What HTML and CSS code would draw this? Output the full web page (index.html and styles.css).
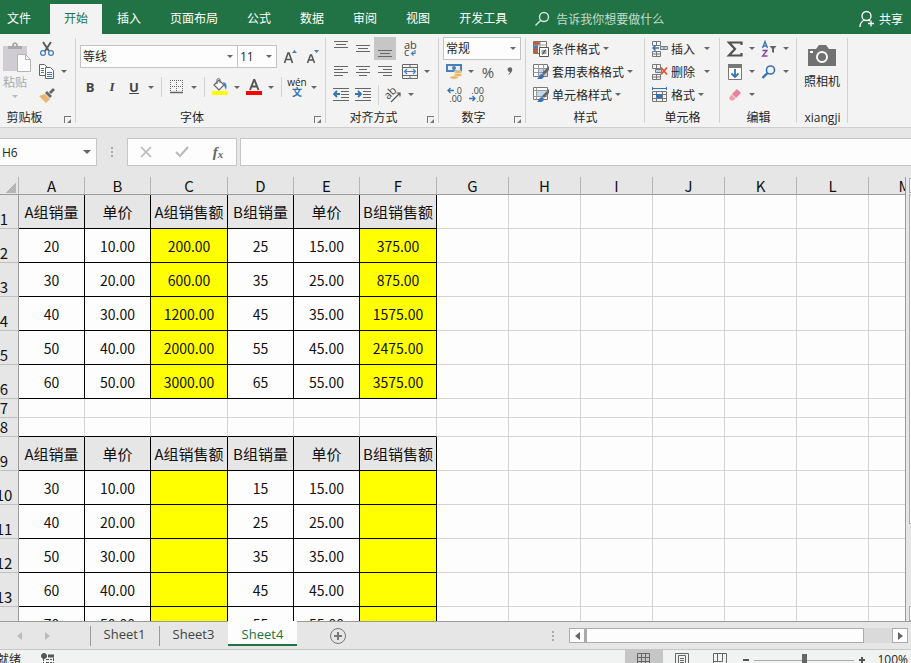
FILE: index.html
```html
<!DOCTYPE html>
<html lang="zh-CN">
<head>
  <meta charset="UTF-8">
  <title>Excel</title>
  <meta name="viewport" content="width=device-width, initial-scale=1.0">
  <link rel="stylesheet" href="styles.css">
</head>
<body>
  <nav class="menu">
    <button class="file">文件</button>
    <button class="active">开始</button>
    <button>插入</button>
    <button>页面布局</button>
    <button>公式</button>
    <button>数据</button>
    <button>审阅</button>
    <button>视图</button>
    <button>开发工具</button>
    <label class="tell-me">
      <svg width="16" height="16" viewBox="0 0 16 16" fill="none" stroke="#d5e6dc" stroke-width="1.4"><circle cx="10" cy="6" r="4.5"/><path d="M6.8 9.2L1.5 14.5"/></svg>
      <input type="text" placeholder="告诉我你想要做什么">
    </label>
    <button class="share">
      <svg width="16" height="18" viewBox="0 0 16 18" fill="none" stroke="#fff" stroke-width="1.3"><circle cx="7.500" cy="6" r="4.500"/><path d="M1 17c0-4 2-6 4.500-7M9 10l2 1M12 10.500v6M9 13.500h6"/></svg>
      共享
    </button>
  </nav>

  <div class="ribbon">
    <section class="group clipboard">
      <div class="body">
        <button class="paste">
          <svg width="30" height="32" viewBox="0 0 30 32"><path d="M1 5h24v25H1z" fill="#cfcdd2"/><path d="M6 8V5h4c0-5 6-5 6 0h4v3z" fill="#a9a9a9"/><circle cx="13" cy="4" r="1" fill="#fff"/><path d="M15.500 13.500h8l5 5v12h-13z" fill="#fbfbfb" stroke="#b4b4b4"/><path d="M23.500 13.500v5h5" fill="none" stroke="#b4b4b4"/></svg>
          <span>粘贴</span>
          <i class="caret"></i>
        </button>
        <div class="rows">
          <div class="row">
            <button class="tool" aria-label="剪切"><svg width="16" height="16" viewBox="0 0 16 16" fill="none"><path d="M4 1l6 9M12 1L6 10" stroke="#5c5c5c" stroke-width="2"/><circle cx="4" cy="12" r="2.400" stroke="#4a7ebb" stroke-width="1.300"/><circle cx="12" cy="12" r="2.400" stroke="#4a7ebb" stroke-width="1.300"/></svg></button>
          </div>
          <div class="row">
            <button class="tool" aria-label="复制"><svg width="16" height="15" viewBox="0 0 16 15" fill="#fff" stroke="#666"><path d="M.5.500h5l3 3v8h-8z"/><path d="M6.500 3.500h5l3 3v8h-8z"/><path d="M2 4.500h3M2 6.500h3M2 8.500h3M8 8.500h5M8 10.500h5M8 12.500h5" stroke="#4a7ebb"/></svg></button>
            <i class="caret"></i>
          </div>
          <div class="row">
            <button class="tool" aria-label="格式刷"><svg width="18" height="16" viewBox="0 0 18 16"><path d="M1 9l6-2 5 5-4 4z" fill="#eab66e"/><path d="M7 6l2-2 5 5-2 2z" fill="#666"/><path d="M11 5l4-4 2 2-4 4z" fill="#666"/></svg></button>
          </div>
        </div>
      </div>
      <h2>剪贴板</h2>
      <i class="launcher"></i>
    </section>

    <section class="group font">
      <div class="body">
        <div class="combos">
          <span class="select font-name"><select aria-label="字体"><option>等线</option></select></span>
          <span class="select font-size"><select aria-label="字号"><option>11</option></select></span>
          <button class="tool grow" aria-label="增大字号"><svg width="16" height="18" viewBox="0 0 16 18"><path d="M1.500 15L5 5h1l3.500 10M3 11.500h5" fill="none" stroke="#555" stroke-width="1.600"/><path d="M9 5l2.500-3L14 5z" fill="#4a7ebb"/></svg></button>
          <button class="tool" aria-label="减小字号"><svg width="16" height="18" viewBox="0 0 16 18"><path d="M1.500 15l3-8h1l3 8M2.500 12h5" fill="none" stroke="#555" stroke-width="1.500"/><path d="M8 2h5l-2.500 3z" fill="#4a7ebb"/></svg></button>
        </div>
        <div class="row">
          <button class="tool bold">B</button>
          <button class="tool italic">I</button>
          <button class="tool underline">U</button>
          <i class="caret"></i>
          <i class="sep"></i>
          <button class="tool" aria-label="边框"><svg width="14" height="14" viewBox="0 0 14 14" fill="none" stroke="#666"><path d="M.5 0v12M6.500 0v12M12.500 0v12M0 .5h13M0 6.500h13" stroke-dasharray="1 1"/><path d="M0 12.500h13" stroke-width="1.500"/></svg></button>
          <i class="caret"></i>
          <i class="sep"></i>
          <button class="tool" aria-label="填充颜色"><svg width="18" height="18" viewBox="0 0 18 18"><path d="M3 7l5-5 5 5-5 5z" fill="#fff" stroke="#666" stroke-width="1.200"/><path d="M6 6V2c0-2 3-2 3 0v3" fill="none" stroke="#666"/><path d="M12 4c4 1 4 4 3 8-1-2-1-3-2-4z" fill="#4a7ebb"/><path d="M1 13h16v4H1z" fill="#ff0"/></svg></button>
          <i class="caret"></i>
          <button class="tool" aria-label="字体颜色"><svg width="18" height="18" viewBox="0 0 18 18"><path d="M5 12L9 2h.500l4 10M6.500 8.500h6" fill="none" stroke="#555" stroke-width="1.900"/><path d="M1 13h16v4H1z" fill="#f00"/></svg></button>
          <i class="caret"></i>
          <i class="sep"></i>
          <button class="tool wen"><span>wén</span><b>文</b></button>
          <i class="caret"></i>
        </div>
      </div>
      <h2>字体</h2>
      <i class="launcher"></i>
    </section>

    <section class="group align">
      <div class="body">
        <div class="rows">
          <div class="row">
            <button class="tool" aria-label="顶端对齐"><svg width="16" height="16" viewBox="0 0 16 16" stroke="#666"><path d="M1 .5h14M3 3.500h10M1 6.500h14"/></svg></button>
            <button class="tool" aria-label="垂直居中"><svg width="16" height="16" viewBox="0 0 16 16" stroke="#666"><path d="M1 4.500h14M3 7.500h10M1 10.500h14"/></svg></button>
            <button class="tool pressed" aria-label="底端对齐"><svg width="16" height="16" viewBox="0 0 16 16" stroke="#666"><path d="M1 9.500h14M3 12.500h10M1 15.500h14"/></svg></button>
            <button class="tool spaced" aria-label="自动换行"><svg width="16" height="18" viewBox="0 0 16 18"><text x="2" y="9" class="glyph">ab</text><text x="2" y="16" class="glyph">c</text><path d="M13 10v3.500H9.500M11.500 11.500l-2 2 2 2" fill="none" stroke="#4a7ebb" stroke-width="1.200"/></svg></button>
          </div>
          <div class="row">
            <button class="tool" aria-label="左对齐"><svg width="16" height="16" viewBox="0 0 16 16" stroke="#666"><path d="M1 2.500h14M1 5.500h9M1 8.500h14M1 11.500h9"/></svg></button>
            <button class="tool" aria-label="居中"><svg width="16" height="16" viewBox="0 0 16 16" stroke="#666"><path d="M1 2.500h14M4 5.500h8M1 8.500h14M4 11.500h8"/></svg></button>
            <button class="tool" aria-label="右对齐"><svg width="16" height="16" viewBox="0 0 16 16" stroke="#666"><path d="M1 2.500h14M6 5.500h9M1 8.500h14M6 11.500h9"/></svg></button>
            <button class="tool spaced" aria-label="合并后居中"><svg width="16" height="16" viewBox="0 0 16 16" fill="none" stroke="#666"><path d="M.5.500h15v14H.5zM.5 3.500h15M.5 11.500h15M8 .5v3M8 11.500v3"/><path d="M2.500 7.500h11M5 5L2.500 7.500 5 10M11 5l2.500 2.500L11 10" stroke="#4a7ebb" stroke-width="1.200"/></svg></button>
            <i class="caret"></i>
          </div>
          <div class="row">
            <button class="tool" aria-label="减少缩进"><svg width="16" height="16" viewBox="0 0 16 16" stroke="#666" fill="none"><path d="M0 1.500h16M8 4.500h8M8 7.500h8M8 10.500h8M0 13.500h16"/><path d="M7 7H1.500M4 4L1 7l3 3" stroke="#3573b5" stroke-width="1.800"/></svg></button>
            <button class="tool" aria-label="增加缩进"><svg width="16" height="16" viewBox="0 0 16 16" stroke="#666" fill="none"><path d="M0 1.500h16M8 4.500h8M8 7.500h8M8 10.500h8M0 13.500h16"/><path d="M0 7h5.500M3 4l3 3-3 3" stroke="#3573b5" stroke-width="1.800"/></svg></button>
            <i class="sep"></i>
            <button class="tool" aria-label="方向"><svg width="18" height="16" viewBox="0 0 18 16"><text x="0" y="11" transform="rotate(-45 4 8)" class="glyph">ab</text><path d="M6 15l9-9M11.500 6H15v3.500" fill="none" stroke="#555" stroke-width="1.200"/></svg></button>
            <i class="caret"></i>
          </div>
        </div>
      </div>
      <h2>对齐方式</h2>
      <i class="launcher"></i>
    </section>

    <section class="group number">
      <div class="body">
        <div class="rows">
          <span class="select"><select aria-label="数字格式"><option>常规</option></select></span>
          <div class="row">
            <button class="tool" aria-label="会计数字格式"><svg width="18" height="17" viewBox="0 0 18 17"><path d="M1 1h16v8H1z" fill="#4a7ebb"/><path d="M3 3h12v4H3z" fill="#e8eff7"/><circle cx="9" cy="5" r="2" fill="#4a7ebb"/><g fill="#e8b563" stroke="#f3f3f3" stroke-width=".5"><ellipse cx="13" cy="9" rx="4" ry="1.700"/><ellipse cx="13" cy="12" rx="4" ry="1.700"/><ellipse cx="9" cy="14.500" rx="4" ry="1.700"/></g></svg></button>
            <i class="caret"></i>
            <button class="tool percent">%</button>
            <button class="tool" aria-label="千位分隔样式"><svg width="8" height="12" viewBox="0 0 8 12"><path d="M2 2c3-2 5 0 4 3-1 2-2 3-4 4 1-2 2-2 2-3-2 0-3-2-2-4z" fill="#666"/></svg></button>
          </div>
          <div class="row">
            <button class="tool decimal" aria-label="增加小数位数"><span><svg width="7" height="7" viewBox="0 0 7 7"><path d="M7 3.500H1M3.500 1L1 3.500 3.500 6" fill="none" stroke="#3573b5" stroke-width="1.300"/></svg>.0</span><span>.00</span></button>
            <button class="tool decimal" aria-label="减少小数位数"><span>.00</span><span><svg width="7" height="7" viewBox="0 0 7 7"><path d="M0 3.500h6M3.500 1L6 3.500 3.500 6" fill="none" stroke="#3573b5" stroke-width="1.300"/></svg>.0</span></button>
          </div>
        </div>
      </div>
      <h2>数字</h2>
      <i class="launcher"></i>
    </section>

    <section class="group styles">
      <div class="body">
        <div class="rows">
          <button class="command"><svg width="16" height="16" viewBox="0 0 16 16"><path d="M.5.500h13v12H.5z" fill="#fff" stroke="#777"/><path d="M1 1h6v3H1zM1 8h4v4H1z" fill="#d35230"/><path d="M1 4h4v4H1z" fill="#4a7ebb"/><path d="M7 1v6M1 4h13" stroke="#999"/><path d="M6.500 6.500h9v9h-9z" fill="#fff" stroke="#555"/><path d="M8.500 10h5M8.500 12h5M12.500 8.500l-3 5" stroke="#444"/></svg>条件格式<i class="caret"></i></button>
          <button class="command"><svg width="16" height="16" viewBox="0 0 16 16"><path d="M.5.500h14v12H.5z" fill="#fff" stroke="#777"/><path d="M5 4h9v8H5z" fill="#c3d5ea"/><path d="M.5 4.500h14M.5 8.500h14M5.500.500v12M10.500.500v12" stroke="#999"/><path d="M16 2v4l-5 5-2-2z" fill="#666"/><path d="M4 15c2-1 2-5 5-5 3 1 2 5-1 5z" fill="#3573b5"/></svg>套用表格格式<i class="caret"></i></button>
          <button class="command"><svg width="16" height="16" viewBox="0 0 16 16"><path d="M.5.500h14v12H.5z" fill="#fff" stroke="#777"/><path d="M.5 3.500h14M.5 9.500h14M3.500.500v12" stroke="#999"/><path d="M4 4h9v5H4z" fill="#c3d5ea"/><path d="M16 2v4l-5 5-2-2z" fill="#666"/><path d="M4 15c2-1 2-5 5-5 3 1 2 5-1 5z" fill="#3573b5"/></svg>单元格样式<i class="caret"></i></button>
        </div>
      </div>
      <h2>样式</h2>
    </section>

    <section class="group cells">
      <div class="body">
        <div class="rows">
          <button class="command"><svg width="16" height="16" viewBox="0 0 16 16" fill="none" stroke="#777"><path d="M.5.500h8v4h-8zM4.500.500v4M.5 10.500h8v5h-8zM4.500 10.500v5M.5 13h8"/><path d="M8.500 5.500h7v3h-7zM12 5.500v3" fill="#c3d5ea"/><path d="M7 7H1M3.500 4.500L1 7l2.500 2.500" stroke="#3573b5" stroke-width="1.500"/></svg>插入<i class="caret far"></i></button>
          <button class="command"><svg width="16" height="16" viewBox="0 0 16 16" fill="none" stroke="#777"><path d="M.5.500h8v4h-8zM4.500.500v4M.5 10.500h8v5h-8zM4.500 10.500v5M.5 13h8"/><path d="M3.500 5.500h6v3h-6z" fill="#c3d5ea"/><path d="M9 3.500l6 7M15 3.500l-6 7" stroke="#e0532f" stroke-width="1.800"/></svg>删除<i class="caret far"></i></button>
          <button class="command"><svg width="16" height="16" viewBox="0 0 16 16" fill="none" stroke="#777"><path d="M1 1.500h13M.5 0v3M14.500 0v3" stroke="#3573b5"/><path d="M.5 4.500h14v10H.5zM.5 7.500h14M.5 11.500h14M4.500 4.500v10M10.500 4.500v10"/><path d="M4 7h6v4H4z" fill="#3573b5" stroke="none"/></svg>格式<i class="caret"></i></button>
        </div>
      </div>
      <h2>单元格</h2>
    </section>

    <section class="group edit">
      <div class="body">
        <div class="rows">
          <div class="row">
            <button class="tool" aria-label="自动求和"><svg width="18" height="16" viewBox="0 0 18 16"><path d="M15.500 4V1.500H3L9 8l-6 6.500h12.500V12" fill="none" stroke="#505050" stroke-width="2.200"/></svg></button>
            <i class="caret"></i>
            <button class="tool" aria-label="排序和筛选"><svg width="16" height="18" viewBox="0 0 16 18" fill="none"><path d="M1.500 8l2.500-6.500L6.500 8M2.500 6h3" stroke="#3573b5" stroke-width="1.300"/><path d="M1.500 10.500h4.500l-4.500 5.500h5" stroke="#8444a4" stroke-width="1.300"/><path d="M8.500 6h7l-2.500 3v4l-2-1V9z" fill="#666"/></svg></button>
            <i class="caret"></i>
          </div>
          <div class="row">
            <button class="tool" aria-label="填充"><svg width="14" height="16" viewBox="0 0 14 16" fill="none"><path d="M.5.500h13v15H.5z" fill="#fff" stroke="#777"/><path d="M0 0h14v4H0z" fill="#777"/><path d="M7 5v8M3.500 9.500L7 13l3.500-3.500" stroke="#3573b5" stroke-width="1.800"/></svg></button>
            <i class="caret"></i>
            <button class="tool" aria-label="查找和选择"><svg width="16" height="14" viewBox="0 0 16 14" fill="none" stroke="#3573b5"><circle cx="9.500" cy="5" r="4" stroke-width="1.600"/><path d="M6.500 8L1.500 13" stroke-width="2.400"/></svg></button>
            <i class="caret"></i>
          </div>
          <div class="row">
            <button class="tool" aria-label="清除"><svg width="14" height="14" viewBox="0 0 14 14"><path d="M9 1l4 4-5 5-4-4z" fill="#e8829a"/><path d="M3.500 6.500l4 4-2 2h-3L1 10z" fill="#ef9fb2"/></svg></button>
            <i class="caret"></i>
          </div>
        </div>
      </div>
      <h2>编辑</h2>
    </section>

    <section class="group camera">
      <div class="body">
        <button>
          <svg width="28" height="24" viewBox="0 0 28 24"><path d="M0 5h8l3-4h7l3 4h7v17H0z" fill="#717171"/><circle cx="14" cy="13" r="5" fill="none" stroke="#fff" stroke-width="2"/><path d="M2 7h3v2H2z" fill="#fff"/></svg>
          照相机
        </button>
      </div>
      <h2>xiangji</h2>
    </section>
  </div>

  <div class="formula-bar">
    <div class="name-box"><input type="text" value="H6" aria-label="名称框"><i class="caret"></i></div>
    <i class="dots"></i>
    <div class="formula-buttons">
      <button aria-label="取消"><svg width="12" height="12" viewBox="0 0 12 12"><path d="M1 1l10 10M11 1L1 11" stroke="#b9b9b9" stroke-width="1.700"/></svg></button>
      <button aria-label="输入"><svg width="14" height="12" viewBox="0 0 14 12"><path d="M1 6l4 4 8-9" fill="none" stroke="#b9b9b9" stroke-width="2"/></svg></button>
      <button class="fx">f<small>x</small></button>
    </div>
    <input class="formula" type="text" aria-label="编辑栏">
  </div>

  <main class="workspace">
    <div class="sheet">
      <table>
        <colgroup>
          <col class="col-row"><col class="col-s"><col class="col-s"><col class="col-l"><col class="col-s"><col class="col-s"><col class="col-l">
          <col class="col-m"><col class="col-m"><col class="col-m"><col class="col-m"><col class="col-m"><col class="col-m"><col class="col-m">
        </colgroup>
        <thead></thead>
        <tbody></tbody>
      </table>
    </div>
    <div class="v-scroll"><i class="v-up"></i><i class="v-thumb"></i><i class="v-down"></i></div>
  </main>

  <div class="sheet-bar">
    <button class="nav" aria-label="上一个"><i class="arrow left"></i></button>
    <button class="nav" aria-label="下一个"><i class="arrow right"></i></button>
    <div class="sheet-tabs">
      <button>Sheet1</button>
      <button>Sheet3</button>
      <button class="active">Sheet4</button>
    </div>
    <button class="add" aria-label="新工作表"><svg width="18" height="18" viewBox="0 0 18 18" fill="none" stroke="#777"><circle cx="9" cy="9" r="7.500"/><path d="M9 5v8M5 9h8" stroke-width="2"/></svg></button>
    <i class="dots"></i>
    <div class="h-scroll">
      <button aria-label="向左"><i class="arrow left"></i></button>
      <i class="h-thumb"></i>
      <button aria-label="向右"><i class="arrow right"></i></button>
    </div>
  </div>

  <footer class="status">
    <span class="ready">就绪</span>
    <svg width="14" height="14" viewBox="0 0 14 14" fill="none" stroke="#555"><path d="M2.500 5v8.500h10v-11H8M5 6.500h6M5 9.500h6M5 12h6" stroke-dasharray="3 1"/><path d="M7 3h6" stroke-width="3"/><circle cx="3" cy="3" r="2.500" fill="#555"/></svg>
    <div class="views">
      <button class="active" aria-label="普通"><svg width="14" height="14" viewBox="0 0 14 14" fill="none" stroke="#666"><path d="M.5.500h12v13H.5zM4.500.500v13M8.500.500v13M.5 4.500h12M.5 8.500h12"/></svg></button>
      <button aria-label="页面布局"><svg width="14" height="14" viewBox="0 0 14 14" fill="none" stroke="#666"><path d="M.5.500h13v13H.5zM3.500 2.500h7v11h-7zM5 5.500h4M5 7.500h4M5 9.500h4"/></svg></button>
      <button aria-label="分页预览"><svg width="14" height="14" viewBox="0 0 14 14" fill="none" stroke="#666"><path d="M.5.500h13v13H.5zM4.500.500v8M9.500.500v8M.5 8.500h9"/></svg></button>
    </div>
    <button class="zoom-step" aria-label="缩小"><svg width="8" height="8" viewBox="0 0 8 8"><path d="M1 4h6" stroke="#555" stroke-width="2"/></svg></button>
    <input class="zoom" type="range" min="0" max="100" value="50" aria-label="缩放">
    <button class="zoom-step" aria-label="放大"><svg width="8" height="8" viewBox="0 0 8 8"><path d="M1 4h6M4 1v6" stroke="#555" stroke-width="2"/></svg></button>
    <span class="percent-label">100%</span>
  </footer>

  <script>
    const columns = ['A', 'B', 'C', 'D', 'E', 'F', 'G', 'H', 'I', 'J', 'K', 'L', 'M'];
    const titles = ['A组销量', '单价', 'A组销售额', 'B组销量', '单价', 'B组销售额'];

    const rows = [
      titles,
      ['20', '10.00', '200.00', '25', '15.00', '375.00'],
      ['30', '20.00', '600.00', '35', '25.00', '875.00'],
      ['40', '30.00', '1200.00', '45', '35.00', '1575.00'],
      ['50', '40.00', '2000.00', '55', '45.00', '2475.00'],
      ['60', '50.00', '3000.00', '65', '55.00', '3575.00'],
      [],
      [],
      titles,
      ['30', '10.00', '', '15', '15.00', ''],
      ['40', '20.00', '', '25', '25.00', ''],
      ['50', '30.00', '', '35', '35.00', ''],
      ['60', '40.00', '', '45', '45.00', ''],
      ['70', '50.00', '', '55', '55.00', '']
    ];

    document.querySelector('thead').innerHTML =
      '<tr><th class="corner"></th>' + columns.map(c => `<th>${c}</th>`).join('') + '</tr>';

    function cellClass(row, r, c) {
      if (c > 5) return '';
      if (!row.length) return rows[r + 1].length ? 'edge' : '';
      if (row === titles) return 'cell title';
      return c === 2 || c === 5 ? 'cell total' : 'cell';
    }

    document.querySelector('tbody').innerHTML = rows.map((row, r) => {
      const cells = columns.map((name, c) => `<td class="${cellClass(row, r, c)}">${row[c] || ''}</td>`).join('');
      return `<tr class="${row.length ? 'tall' : 'short'}"><th><span>${r + 1}</span></th>${cells}</tr>`;
    }).join('');
  </script>
</body>
</html>
```
FILE: styles.css
```css
* {
  box-sizing: border-box;
  margin: 0;
  padding: 0;
}

body {
  font-family: "Open Sans", "Noto Sans CJK SC", sans-serif;
  font-size: 12px;
  color: #262626;
  background-color: #e6e6e6;
  height: 100vh;
  display: flex;
  flex-direction: column;
  overflow: hidden;
}

button,
input,
select {
  font: inherit;
  color: inherit;
  border: none;
  background: none;
  border-radius: 0;
  outline: none;
}

button {
  white-space: nowrap;
}

svg {
  display: block;
  flex: none;
}

.glyph {
  font-size: 11px;
  fill: #444;
}

/* menu */
.menu {
  background-color: #217346;
  color: white;
  height: 34px;
  flex: none;
  display: flex;
  gap: 1px;
  padding-top: 4px;
}

.menu button {
  padding: 0 14px 2px;
}

.menu .file {
  padding-left: 7px;
  padding-right: 18px;
}

.menu .active {
  background-color: #f3f3f3;
  color: #217346;
}

.tell-me {
  display: flex;
  align-items: center;
  gap: 6px;
  margin-left: 12px;
  flex: 1;
}

.tell-me input {
  width: 160px;
}

.tell-me input::placeholder {
  color: #c5dccf;
  opacity: 1;
}

.menu .share {
  display: flex;
  align-items: center;
  gap: 4px;
  padding: 0 8px 0 0;
}

/* ribbon */
.ribbon {
  background-color: #f3f3f3;
  border-bottom: 1px solid #cfcfcf;
  height: 94px;
  flex: none;
  display: flex;
  padding-top: 3px;
}

.group {
  position: relative;
  display: flex;
  flex-direction: column;
  flex: none;
}

.group::after {
  content: "";
  position: absolute;
  right: 0;
  top: 1px;
  bottom: 4px;
  width: 1px;
  background-color: #d2d2d2;
}

.group h2 {
  font-size: 12px;
  font-weight: normal;
  line-height: 18px;
  padding-top: 3px;
  text-align: center;
}

.body {
  height: 69px;
  display: flex;
}

.rows {
  display: flex;
  flex-direction: column;
}

.row {
  display: flex;
  align-items: center;
  height: 23px;
}

.tool {
  width: 22px;
  height: 23px;
  display: flex;
  align-items: center;
  justify-content: center;
}

.pressed {
  background-color: #c6c6c6;
}

.caret {
  width: 12px;
  flex: none;
  display: flex;
  justify-content: center;
}

.caret::before,
.select::after {
  content: "";
  border: 3px solid transparent;
  border-top-color: #666;
  border-bottom: none;
}

.sep {
  width: 1px;
  height: 20px;
  margin: 0 4px;
  background-color: #d2d2d2;
}

.launcher {
  position: absolute;
  right: 5px;
  bottom: 4px;
  width: 7px;
  height: 7px;
  border-left: 1px solid #777;
  border-top: 1px solid #777;
}

.launcher::after {
  content: "";
  position: absolute;
  right: 0;
  bottom: 0;
  border: 2px solid #777;
  border-left-color: transparent;
  border-top-color: transparent;
}

.select {
  position: relative;
  display: block;
  height: 23px;
  border: 1px solid #c3c3c3;
  background-color: #fdfdfd;
}

.select select {
  appearance: none;
  width: 100%;
  height: 21px;
  padding: 0 2px;
}

.select::after {
  position: absolute;
  right: 4px;
  top: 9px;
  pointer-events: none;
}

.clipboard {
  width: 76px;
}

.clipboard h2 {
  padding-right: 27px;
}

.paste {
  width: 36px;
  color: #aaa;
  display: flex;
  flex-direction: column;
  align-items: center;
  padding: 4px 6px 0 0;
}

.paste svg {
  margin-left: 4px;
}

.paste .caret {
  padding-top: 4px;
}

.paste .caret::before {
  border-top-color: #b8b8b8;
}

.font {
  width: 250px;
}

.font .body {
  flex-direction: column;
  padding: 8px 0 0 3px;
}

.font .row {
  height: 38px;
}

.font h2 {
  padding-right: 18px;
}

.combos {
  display: flex;
  padding-left: 1px;
}

.font-name {
  width: 158px;
}

.font-size {
  width: 40px;
  margin-left: -1px;
}

.grow {
  margin: 0 1px 0 3px;
}

.bold,
.italic,
.underline {
  font-weight: bold;
  font-size: 13px;
  color: #444;
}

.italic {
  font-family: "Liberation Serif", serif;
  font-style: italic;
}

.underline {
  text-decoration: underline;
}

.wen {
  flex-direction: column;
  font-size: 10px;
  line-height: 10px;
}

.wen b {
  color: #3573b5;
}

.align {
  width: 113px;
}

.align .body,
.number .body,
.edit .body {
  padding-left: 4px;
}

.align h2,
.number h2 {
  padding-right: 18px;
}

.spaced {
  margin-left: 3px;
}

.number {
  width: 87px;
}

.number .select {
  width: 78px;
}

.percent {
  font-size: 15px;
  color: #555;
}

.decimal {
  flex-direction: column;
  align-items: flex-end;
  padding-right: 3px;
  font-size: 9px;
  line-height: 8px;
  color: #444;
}

.decimal span {
  display: flex;
  align-items: center;
}

.styles {
  width: 119px;
}

.styles .body,
.cells .body {
  padding-left: 7px;
}

.command {
  height: 23px;
  display: flex;
  align-items: center;
}

.command svg {
  margin-right: 3px;
}

.far {
  margin-left: 6px;
}

.cells {
  width: 75px;
}

.edit {
  width: 77px;
}

.camera {
  width: 51px;
}

.camera button {
  width: 50px;
  display: flex;
  flex-direction: column;
  align-items: center;
  gap: 4px;
  padding-top: 7px;
}

/* formula bar */
.formula-bar {
  height: 49px;
  flex: none;
  display: flex;
  padding: 10px 0 11px;
}

.name-box {
  width: 97px;
  display: flex;
  align-items: center;
  border: 1px solid #c6c6c6;
  border-left: none;
  background-color: #fdfdfd;
  padding-right: 3px;
}

.name-box input {
  flex: 1;
  min-width: 0;
  padding-left: 2px;
}

.name-box .caret::before {
  border-width: 4px 4px 0;
}

.dots {
  align-self: center;
  width: 2px;
  height: 10px;
  background: repeating-linear-gradient(#aaa 0 2px, transparent 2px 4px);
}

.formula-bar .dots {
  margin: 0 14px;
}

.formula-buttons {
  display: flex;
  width: 110px;
  margin-right: 3px;
  border: 1px solid #c6c6c6;
  background-color: #fdfdfd;
}

.formula-buttons button {
  flex: 1;
  display: flex;
  align-items: center;
  justify-content: center;
}

.formula-buttons .fx {
  font-family: "Liberation Serif", serif;
  font-style: italic;
  font-weight: bold;
  font-size: 15px;
  color: #666;
}

.fx small {
  font-size: 11px;
  padding-top: 4px;
}

.formula {
  flex: 1;
  min-width: 0;
  border: 1px solid #c6c6c6;
  border-right: none;
  background-color: #fdfdfd;
}

/* sheet */
.workspace {
  flex: 1;
  min-height: 0;
  display: flex;
}

.sheet {
  flex: 1;
  min-width: 0;
  overflow: hidden;
  border-right: 1px solid #9b9b9b;
}

table {
  table-layout: fixed;
  width: 941px;
  border-spacing: 0;
  font-family: "Noto Sans CJK SC", sans-serif;
  font-size: 15px;
  line-height: 18px;
  color: #111;
}

.col-row {
  width: 19px;
}

.col-s {
  width: 66px;
}

.col-l {
  width: 77px;
}

.col-m {
  width: 72px;
}

th {
  font-weight: normal;
  background-color: #e6e6e6;
}

thead th {
  height: 18px;
  line-height: 17px;
  border-right: 1px solid #b5b5b5;
  border-bottom: 1px solid #9b9b9b;
}

thead .corner {
  background: linear-gradient(135deg, transparent 55%, #b5b5b5 55%) 4px 4px / 12px 12px no-repeat;
}

tbody th {
  border-right: 1px solid #9b9b9b;
  border-bottom: 1px solid #c0c0c0;
  vertical-align: bottom;
}

tbody th span {
  width: 8px;
  display: flex;
  justify-content: center;
}

td {
  background-color: #fdfdfd;
  border-right: 1px solid #d4d4d4;
  border-bottom: 1px solid #d4d4d4;
  text-align: center;
  white-space: nowrap;
}

.tall {
  height: 34px;
}

.short {
  height: 19px;
}

.cell {
  border-color: black;
  font-size: 14px;
}

.title {
  background-color: #e7e6e6;
  font-size: 15px;
}

.total {
  background-color: #ff0;
}

.edge {
  border-bottom-color: black;
}

.v-scroll {
  width: 5px;
  padding: 1px 0 0 3px;
  display: flex;
  flex-direction: column;
}

.v-scroll i {
  border: 1px solid #ababab;
  border-right: none;
  background-color: #fdfdfd;
}

.v-up,
.v-down {
  height: 15px;
}

.v-thumb {
  height: 330px;
  margin-top: 1px;
}

.v-down {
  margin-top: auto;
}

/* sheet tabs */
.sheet-bar {
  height: 29px;
  flex: none;
  display: flex;
  align-items: center;
  border-top: 1px solid #9b9b9b;
  border-bottom: 1px solid #c6c6c6;
}

.nav {
  width: 28px;
  padding-left: 10px;
  display: flex;
  justify-content: center;
}

.arrow {
  border: 4px solid transparent;
}

.left {
  border-left: none;
  border-right: 5px solid #666;
}

.right {
  border-right: none;
  border-left: 5px solid #666;
}

.nav .left {
  border-right-color: #bbb;
}

.nav .right {
  border-left-color: #bbb;
}

.sheet-tabs {
  align-self: flex-start;
  display: flex;
  margin: -1px 0 0 34px;
  font-size: 13px;
}

.sheet-tabs button {
  height: 25px;
  width: 69px;
  color: #444;
  background: linear-gradient(#999, #999) 0 5px / 1px 20px no-repeat;
}

.sheet-tabs .active {
  background: #fdfdfd;
  color: #217346;
  border-bottom: 2px solid #217346;
  padding-top: 2px;
}

.add {
  margin-left: 32px;
}

.sheet-bar .dots {
  margin-left: auto;
}

.h-scroll {
  width: 339px;
  height: 15px;
  margin: 0 3px 0 15px;
  display: flex;
  background-color: #dadada;
}

.h-scroll button {
  width: 16px;
  border: 1px solid #ababab;
  background-color: #fdfdfd;
  display: flex;
  align-items: center;
  justify-content: center;
}

.h-thumb {
  flex: 1;
  margin-right: 28px;
  border: 1px solid #ababab;
  border-left-width: 2px;
  background-color: #fdfdfd;
}

/* status bar */
.status {
  height: 13px;
  flex: none;
  display: flex;
  align-items: flex-start;
  overflow: hidden;
  background-color: #f1f3f2;
}

.status > svg {
  margin: 3px 0 0 20px;
}

.ready {
  margin-left: -3px;
  line-height: 20px;
}

.views {
  display: flex;
  margin-left: auto;
}

.views button {
  width: 38px;
  height: 20px;
  display: flex;
  align-items: center;
  justify-content: center;
}

.views .active {
  background-color: #c6c6c6;
}

.zoom-step {
  width: 14px;
  height: 20px;
  display: flex;
  align-items: center;
  justify-content: center;
}

.zoom {
  appearance: none;
  width: 100px;
  height: 20px;
  margin: 0 1px;
  background: linear-gradient(#aaa, #aaa) 0 10px / 100% 1px no-repeat;
}

.zoom::-webkit-slider-thumb {
  appearance: none;
  width: 5px;
  height: 12px;
  background-color: #666;
}

.percent-label {
  margin: 0 3px 0 8px;
  line-height: 20px;
}
```
